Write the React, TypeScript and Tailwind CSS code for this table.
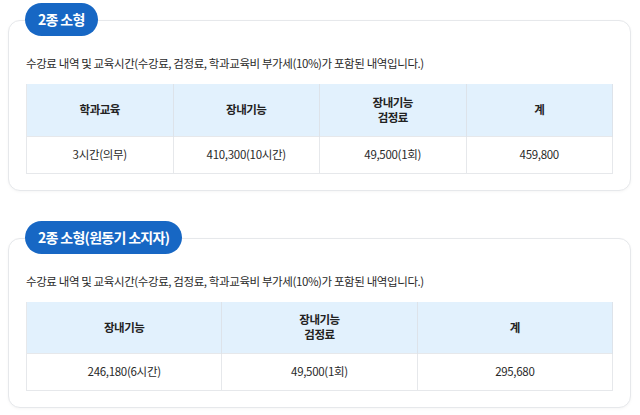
import React from "react";

const font = { fontFamily: '"Noto Sans CJK KR", "Noto Sans", sans-serif' };

type Section = {
  title: string;
  headers: string[][];
  values: string[];
};

const sections: Section[] = [
  {
    title: "2종 소형",
    headers: [["학과교육"], ["장내기능"], ["장내기능", "검정료"], ["계"]],
    values: ["3시간(의무)", "410,300(10시간)", "49,500(1회)", "459,800"],
  },
  {
    title: "2종 소형(원동기 소지자)",
    headers: [["장내기능"], ["장내기능", "검정료"], ["계"]],
    values: ["246,180(6시간)", "49,500(1회)", "295,680"],
  },
];

function FeeSection({ s }: { s: Section }) {
  return (
    <div className="flex flex-col">
      <div className="relative z-10 self-start ml-[17px] h-[33px] px-[13px] rounded-full bg-[#1767c4] flex items-center text-white text-[14px] font-bold tracking-[-0.7px]">
        {s.title}
      </div>
      <div className="-mt-[16px] rounded-[12px] border border-[#e6e8eb] bg-white shadow-[0_1px_3px_rgba(0,0,0,0.04)] px-[17px] pt-[34px] pb-[16px]">
        <p className="text-[11.5px] leading-[16px] tracking-[-0.4px] text-[#2a2a2a]">
          수강료 내역 및 교육시간(수강료, 검정료, 학과교육비 부가세(10%)가 포함된 내역입니다.)
        </p>
        <table className="mt-[13px] w-full table-fixed border-collapse">
          <thead>
            <tr className="bg-[#e2f1fd]">
              {s.headers.map((h, i) => (
                <th
                  key={i}
                  className="h-[52px] border-x border-[#dde3ea] first:border-l-[#e6e8eb] text-[11.5px] leading-[15px] font-bold tracking-[-0.5px] text-[#222] text-center"
                >
                  {h.map((line, j) => (
                    <div key={j}>{line}</div>
                  ))}
                </th>
              ))}
            </tr>
          </thead>
          <tbody>
            <tr>
              {s.values.map((v, i) => (
                <td
                  key={i}
                  className="h-[37px] border border-[#e6e8eb] text-[11.5px] tracking-[-0.3px] text-[#2a2a2a] text-center"
                >
                  {v}
                </td>
              ))}
            </tr>
          </tbody>
        </table>
      </div>
    </div>
  );
}

export default function App() {
  return (
    <div style={font} className="w-[640px] h-[415px] bg-white overflow-hidden">
      <div className="pl-[8px] pr-[9px] pt-[3px] flex flex-col gap-[30px]">
        {sections.map((s, i) => (
          <FeeSection key={i} s={s} />
        ))}
      </div>
    </div>
  );
}
